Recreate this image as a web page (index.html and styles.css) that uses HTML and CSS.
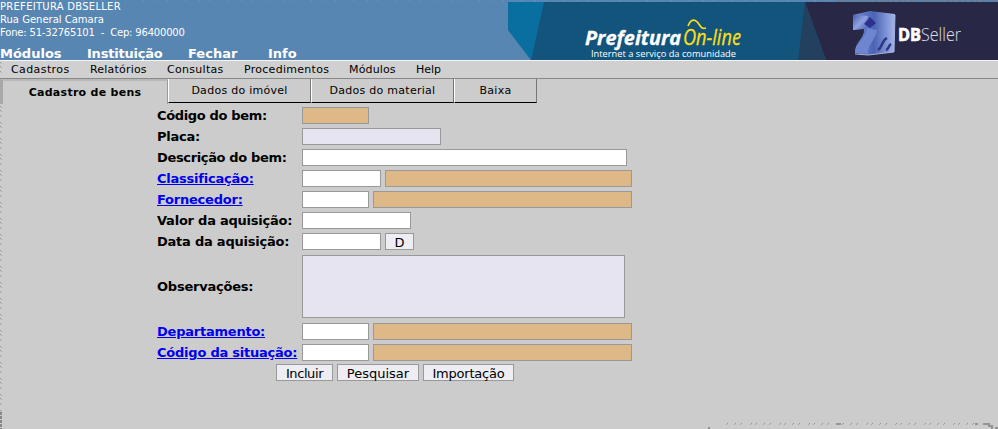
FILE: index.html
```html
<!DOCTYPE html>
<html lang="pt-BR">
<head>
<meta charset="utf-8">
<title>Cadastro de bens</title>
<link rel="stylesheet" href="styles.css">
</head>
<body>
<header class="header">
  <div class="identity">
    <address class="company"><span class="c1">PREFEITURA DBSELLER</span><span class="c2">Rua General Camara</span><span class="c3">Fone: 51-32765101 &nbsp;- &nbsp;Cep: 96400000</span></address>
    <nav class="main-nav"><a class="n1">Módulos</a><a class="n2">Instituição</a><a class="n3">Fechar</a><a class="n4">Info</a></nav>
  </div>
  <svg class="banner" width="490" height="58" viewBox="0 0 490 58">
    <defs>
      <linearGradient id="cube" x1="0" y1="0" x2="1" y2="1"><stop offset="0" stop-color="#4a5cad"/><stop offset=".5" stop-color="#8ea2e0"/><stop offset="1" stop-color="#4b5ba8"/></linearGradient>
      <linearGradient id="face" x1="0" y1="0" x2="1" y2="0"><stop offset="0" stop-color="#7790d7"/><stop offset=".5" stop-color="#4a63b4"/><stop offset="1" stop-color="#a3b6ec"/></linearGradient>
    </defs>
    <path fill="#13547d" d="M0 0h490v58H0z"/>
    <path fill="#096fa1" d="M0 0h36L23 58 0 28z"/>
    <path fill="#5886b2" d="M0 28l23 30H0z"/>
    <path fill="#282846" d="M297 0h193v58H318z"/>
    <path fill="#24405f" d="M297 0l21 58h-28z"/>
    <text class="brand" x="77" y="43" textLength="96" lengthAdjust="spacingAndGlyphs">Prefeitura</text>
    <text class="online" x="175" y="43" textLength="58" lengthAdjust="spacingAndGlyphs">On-line</text>
    <path d="M180 24q3-8 8-5c4 2 4 9 10 7" fill="none" stroke="#f8df18" stroke-width="1.7"/>
    <text class="slogan" x="83" y="55" textLength="145" lengthAdjust="spacingAndGlyphs">Internet a serviço da comunidade</text>
    <path fill="url(#face)" d="M345 13l17-4 25 3-1 38-26 3-13-2c-1-10 10-15 9-24l-11 1z"/>
    <path fill="url(#cube)" d="M345 13l15 1-2 12-13 2z"/>
    <path fill="#6e85cf" d="M359 26c0 9-11 16-11 25l12 1c0-11 8-14 9-24z"/>
    <path fill="#2c318c" d="M362 15l6 6-6 5-6-4z"/>
    <path d="M370 48c5-3 3-9 9-12M378 48c3-1 2-4 5-6" fill="none" stroke="#2b377f" stroke-width="2.5"/>
    <path d="M347 52l13 1 26-3 1-37" fill="none" stroke="#a6b2dc" stroke-width="1"/>
    <text class="db" x="390" y="39" textLength="23" lengthAdjust="spacingAndGlyphs">DB</text>
    <text class="seller" x="413" y="39" textLength="40" lengthAdjust="spacingAndGlyphs">Seller</text>
  </svg>
</header>
<nav class="menu"><a class="m1">Cadastros</a><a class="m2">Relatórios</a><a class="m3">Consultas</a><a class="m4">Procedimentos</a><a class="m5">Módulos</a><a class="m6">Help</a></nav>
<div class="tabs">
  <div class="tab active"><span>Cadastro de bens</span></div>
  <div class="tab t2"><span>Dados do imóvel</span></div>
  <div class="tab t3"><span>Dados do material</span></div>
  <div class="tab t4"><span>Baixa</span></div>
</div>
<form class="form">
  <div class="row"><label class="tight">Código do bem:</label><i class="field w67 tan"></i></div>
  <div class="row"><label>Placa:</label><i class="field w139 lilac"></i></div>
  <div class="row"><label class="tight">Descrição do bem:</label><i class="field w325"></i></div>
  <div class="row"><label><a class="link">Classificação:</a></label><i class="field w79"></i><i class="field w247 tan"></i></div>
  <div class="row"><label><a class="link">Fornecedor:</a></label><i class="field w67"></i><i class="field w259 tan"></i></div>
  <div class="row"><label>Valor da aquisição:</label><i class="field w109"></i></div>
  <div class="row"><label>Data da aquisição:</label><i class="field w79"></i><button type="button" class="btn bd">D</button></div>
  <div class="row notes"><label>Observações:</label><i class="field area lilac"></i></div>
  <div class="row"><label><a class="link">Departamento:</a></label><i class="field w67"></i><i class="field w259 tan"></i></div>
  <div class="row"><label><a class="link">Código da situação:</a></label><i class="field w67"></i><i class="field w259 tan"></i></div>
  <div class="actions"><button type="button" class="btn b1">Incluir</button><button type="button" class="btn b2">Pesquisar</button><button type="button" class="btn b3">Importação</button></div>
</form>
<svg class="edges" width="998" height="429" viewBox="0 0 998 429" shape-rendering="crispEdges" fill="none">
  <path d="M17 .5H838" stroke="#8b8f96" stroke-dasharray="1 13 1 9 1 17"/>
  <path d="M838 .5H998" stroke="#77777d" stroke-dasharray="3 3 2 4"/>
  <path d="M838 1.5H998" stroke="#6c7180" stroke-dasharray="1 5 1 4"/>
  <path d="M.5 62V78M.5 106V413" stroke="#999" stroke-dasharray="1 3 1 4 1 6"/>
  <path d="M1.5 63V78M1.5 107V413" stroke="#aaa" stroke-dasharray="1 3 1 4 1 6"/>
  <path d="M1 412V429" stroke="#888" stroke-width="2" stroke-dasharray="3 1"/>
  <path d="M727 423.5H975" stroke="#949494" stroke-dasharray="1 7 1 5 1 9 1 4"/>
  <path d="M726 424.5H975" stroke="#a4a4a4" stroke-dasharray="1 7 1 5 1 9 1 4"/>
  <path d="M836 424h5M975 424h3M983 424h7M988 426h5M991 428h2M995 428h3M708 428h2" stroke="#949494" stroke-width="2"/>
</svg>
</body>
</html>
```
FILE: styles.css
```css
* { box-sizing: border-box; }
body { margin: 0; width: 998px; height: 429px; overflow: hidden; background: #ccc; color: #000; font: 11px "DejaVu Sans", sans-serif; }
.header { height: 60px; display: flex; justify-content: space-between; background: #5886b2; color: #fff; }
.identity { width: 500px; }
.company { font: 10px/13px "DejaVu Sans", sans-serif; height: 46px; }
.company span { display: block; white-space: nowrap; }
.c1 { letter-spacing: .27px; }
.c3 { letter-spacing: -.18px; }
.main-nav { display: flex; font: bold 13px/16px "DejaVu Sans", sans-serif; }
.main-nav a { white-space: nowrap; }
.n1 { width: 87px; }
.n2 { width: 101px; letter-spacing: -.22px; }
.n3 { width: 80px; }
.banner { display: block; margin-top: 2px; }
.brand { font: italic bold 20px "Open Sans", sans-serif; fill: #fff; stroke: #fff; stroke-width: .3px; }
.online { font: italic 21px "Open Sans", sans-serif; fill: #f8df18; stroke: #f8df18; stroke-width: .3px; }
.slogan { font: 9.5px "Open Sans", sans-serif; fill: #fff; }
.db { font: bold 18px "Open Sans", sans-serif; fill: #fff; stroke: #fff; stroke-width: .7px; }
.seller { font: 300 18px "Open Sans", sans-serif; fill: #e0e0ea; }
.menu { height: 19px; border-top: 1px solid #f4f4f4; border-bottom: 1px solid #888; background: #d0d0d0; display: flex; line-height: 17px; padding-left: 11px; }
.m1 { width: 79px; letter-spacing: .4px; }
.m2 { width: 77px; letter-spacing: .2px; }
.m3 { width: 77px; letter-spacing: .3px; }
.m4 { width: 105px; letter-spacing: .28px; }
.m5 { width: 67px; letter-spacing: .15px; }
.tabs { display: flex; height: 25px; }
.tab { height: 24px; border-left: 1px solid #fff; border-right: 1px solid #777; border-bottom: 1px solid #000; line-height: 23px; text-align: center; letter-spacing: .27px; }
.tab.active { width: 168px; height: 25px; border-left: 3px solid #a8a8a8; border-top: 2px solid #b8b8b8; border-right: 1px solid #999; border-bottom: 0; font-weight: bold; line-height: 23px; }
.t2 { width: 143px; }
.t3 { width: 143px; }
.t4 { width: 83px; }
.form { margin: 0; padding: 3px 0 0 157px; }
.row { display: flex; align-items: flex-start; gap: 4px; height: 21px; }
label { width: 141px; font: bold 13px/17px "DejaVu Sans", sans-serif; letter-spacing: -.23px; white-space: nowrap; }
.tight { letter-spacing: -.35px; }
.link { color: #00e; text-decoration: underline; }
.field { display: block; height: 17px; border: 1px solid #999; background: #fff; }
.tan { background: #deb887; }
.lilac { background: #e6e4f1; }
.w67 { width: 67px; }
.w79 { width: 79px; }
.w109 { width: 109px; }
.w139 { width: 139px; }
.w247 { width: 247px; }
.w259 { width: 259px; }
.w325 { width: 325px; }
.notes { height: 69px; padding-top: 1px; }
.notes label { line-height: 63px; }
.area { width: 323px; height: 63px; }
.btn { height: 17px; padding: 2px 0 0; border: 1px solid #999; border-radius: 0; background: #ededf3; color: #000; font: 13px/14px "DejaVu Sans", sans-serif; letter-spacing: -.2px; white-space: nowrap; }
.bd { width: 29px; }
.actions { display: flex; gap: 4px; padding-left: 119px; margin-top: -1px; }
.b1 { width: 57px; letter-spacing: -.4px; }
.b2 { width: 82px; letter-spacing: 0; }
.b3 { width: 91px; }
.edges { position: absolute; left: 0; top: 0; pointer-events: none; }
```
